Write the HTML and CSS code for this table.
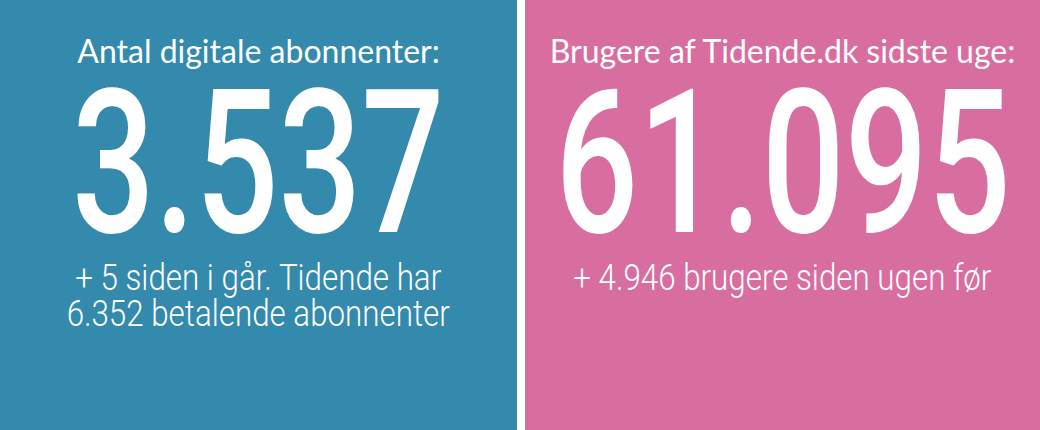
FILE: index.html
```html
<!DOCTYPE html>
<html lang="da">
<head>
<meta charset="utf-8">
<title>Tidende tal</title>
<link rel="stylesheet" href="styles.css">
</head>
<body>
<main class="board">
  <section class="panel panel--blue">
    <h2 class="panel__title">Antal digitale abonnenter:</h2>
    <div class="panel__number"><span class="squeeze">3.537</span></div>
    <p class="panel__note"><span class="squeeze squeeze--note">+ 5 siden i går. Tidende har<br>6.352 betalende abonnenter</span></p>
  </section>
  <section class="panel panel--pink">
    <h2 class="panel__title">Brugere af Tidende.dk sidste uge:</h2>
    <div class="panel__number"><span class="squeeze">61.095</span></div>
    <p class="panel__note"><span class="squeeze squeeze--note">+ 4.946 brugere siden ugen før</span></p>
  </section>
</main>
</body>
</html>
```

FILE: styles.css
```css
html, body {
  margin: 0;
  padding: 0;
  background: #ffffff;
}

.board {
  display: flex;
  gap: 8px;
  width: 1040px;
  height: 430px;
  overflow: hidden;
}

.panel {
  display: flex;
  flex-direction: column;
  align-items: center;
  flex: 0 0 516px;
  width: 516px;
  min-width: 0;
  height: 430px;
  padding-top: 36px;
  box-sizing: border-box;
  color: #ffffff;
}

.panel--blue {
  flex-basis: 517px;
  width: 517px;
  background: #338aac;
}

.panel--pink {
  flex-basis: 515px;
  width: 515px;
  background: #d86e9f;
}

.panel__title {
  margin: 0;
  font-family: "Lato", "Noto Sans", sans-serif;
  font-weight: 400;
  font-size: 32px;
  line-height: 30px;
  white-space: nowrap;
}

.panel__number {
  margin: -2px 0 0;
  font-family: "Roboto", "Liberation Sans", sans-serif;
  font-weight: 500;
  font-size: 200px;
  line-height: 200px;
  white-space: nowrap;
}

.squeeze {
  display: inline-block;
  transform: scaleX(0.73);
  transform-origin: center;
}

.panel__note {
  margin: -4px 0 0;
  font-family: "Roboto", "Liberation Sans", sans-serif;
  font-weight: 300;
  font-size: 36px;
  line-height: 36px;
  text-align: center;
  white-space: nowrap;
}

.squeeze--note {
  transform: scaleX(0.87);
}
```
